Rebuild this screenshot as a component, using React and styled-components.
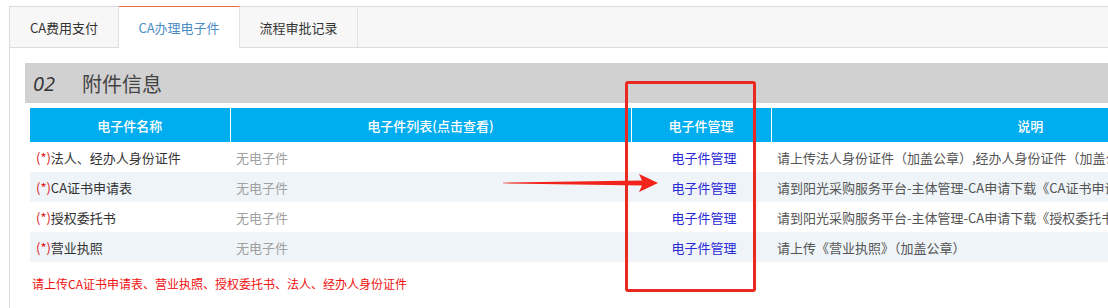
import React from "react";
import styled, { createGlobalStyle } from "styled-components";

const GlobalStyle = createGlobalStyle`
  body {
    margin: 0;
    background: #fff;
    font-family: "Noto Sans CJK SC", "Noto Sans", sans-serif;
    overflow: hidden;
  }
`;

const tabs = ["CA费用支付", "CA办理电子件", "流程审批记录"];

const rows = [
  { name: "法人、经办人身份证件", note: "请上传法人身份证件（加盖公章）,经办人身份证件（加盖公章）" },
  { name: "CA证书申请表", note: "请到阳光采购服务平台-主体管理-CA申请下载《CA证书申请表》填写并加盖公章后上传" },
  { name: "授权委托书", note: "请到阳光采购服务平台-主体管理-CA申请下载《授权委托书》填写并加盖公章后上传" },
  { name: "营业执照", note: "请上传《营业执照》（加盖公章）" },
];

function App() {
  return (
    <Page>
      <GlobalStyle />
      <TabBar>
        {tabs.map((t, i) => (
          <Tab key={t} active={i === 1} wide={i === 1}>
            {t}
          </Tab>
        ))}
      </TabBar>
      <Content>
        <SectionTitle>
          <SectionNo>02</SectionNo>
          <SectionName>附件信息</SectionName>
        </SectionTitle>
        <Table>
          <colgroup>
            <col style={{ width: 200 }} />
            <col style={{ width: 401 }} />
            <col style={{ width: 140 }} />
            <col style={{ width: 518 }} />
          </colgroup>
          <thead>
            <tr>
              <Th>电子件名称</Th>
              <Th>电子件列表(点击查看)</Th>
              <Th>电子件管理</Th>
              <Th>说明</Th>
            </tr>
          </thead>
          <tbody>
            {rows.map((r, i) => (
              <Row key={r.name} striped={i % 2 === 1}>
                <Td>
                  <Required>(*)</Required>
                  {r.name}
                </Td>
                <Td muted>无电子件</Td>
                <Td center>
                  <Link>电子件管理</Link>
                </Td>
                <Td note>{r.note}</Td>
              </Row>
            ))}
          </tbody>
        </Table>
        <Hint>请上传CA证书申请表、营业执照、授权委托书、法人、经办人身份证件</Hint>
      </Content>

      <Highlight />
      <Arrow viewBox="0 0 165 26" width="165" height="26">
        <polygon
          points="3,12.7 142,10.6 139,4 158,13 139,22 142,15.4 3,13.3"
          fill="#f2231b"
        />
      </Arrow>
    </Page>
  );
}

const Page = styled.div`
  position: relative;
  width: 1108px;
  height: 308px;
  padding: 6px 0 0 9px;
  box-sizing: border-box;
  overflow: hidden;
`;

const TabBar = styled.div`
  display: flex;
  height: 40px;
  background: #f7f7f7;
  border-top: 1px solid #dcdcdc;
  border-bottom: 1px solid #dcdcdc;
  border-left: 1px solid #dcdcdc;
`;

const Tab = styled.div`
  display: flex;
  align-items: center;
  justify-content: center;
  width: ${(p) => (p.wide ? "121px" : "118px")};
  &:first-child {
    width: 109px;
  }
  font-size: 13px;
  color: ${(p) => (p.active ? "#4d8cc4" : "#333")};
  background: ${(p) => (p.active ? "#fff" : "transparent")};
  border-right: 1px solid #e2e2e2;
  border-top: ${(p) => (p.active ? "1px solid #e8683f" : "none")};
  margin-top: ${(p) => (p.active ? "-1px" : "0")};
  margin-bottom: ${(p) => (p.active ? "-1px" : "0")};
  box-sizing: border-box;
  padding-top: ${(p) => (p.active ? "0" : "1px")};
`;

const Content = styled.div`
  border-left: 1px solid #dcdcdc;
  padding: 15px 0 0 15px;
  height: 260px;
  box-sizing: border-box;
`;

const SectionTitle = styled.div`
  display: flex;
  align-items: center;
  height: 40px;
  background: #d1d1d1;
  padding-left: 8px;
  width: 1200px;
  margin-bottom: 5px;
`;

const SectionNo = styled.span`
  font-family: "Open Sans", "Liberation Sans", sans-serif;
  font-style: italic;
  font-size: 20px;
  color: #333;
  width: 49px;
`;

const SectionName = styled.span`
  font-size: 20px;
  color: #444;
`;

const Table = styled.table`
  margin-left: 5px;
  border-collapse: collapse;
  table-layout: fixed;
  width: 1259px;
`;

const Th = styled.th`
  height: 34px;
  padding: 0;
  background: #00adef;
  color: #fff;
  font-size: 13px;
  font-weight: 500;
  text-align: center;
  border-left: 1px solid #fff;
  &:first-child {
    border-left: none;
  }
`;

const Row = styled.tr`
  background: ${(p) => (p.striped ? "#eef4f8" : "#fff")};
`;

const Td = styled.td`
  height: 30px;
  padding: 0 0 0 6px;
  font-size: 13px;
  white-space: nowrap;
  overflow: hidden;
  color: ${(p) => (p.muted ? "#a0a0a0" : p.note ? "#555" : "#333")};
  text-align: ${(p) => (p.center ? "center" : "left")};
`;

const Required = styled.span`
  color: #e02020;
`;

const Link = styled.span`
  color: #2a2ad6;
`;

const Hint = styled.div`
  margin: 13px 0 0 7px;
  font-size: 12px;
  color: #f01010;
`;

const Highlight = styled.div`
  position: absolute;
  left: 625px;
  top: 81px;
  width: 131px;
  height: 211px;
  box-sizing: border-box;
  border: 3px solid #ea2a22;
  border-radius: 3px;
`;

const Arrow = styled.svg`
  position: absolute;
  left: 500px;
  top: 170px;
`;

export default App;
